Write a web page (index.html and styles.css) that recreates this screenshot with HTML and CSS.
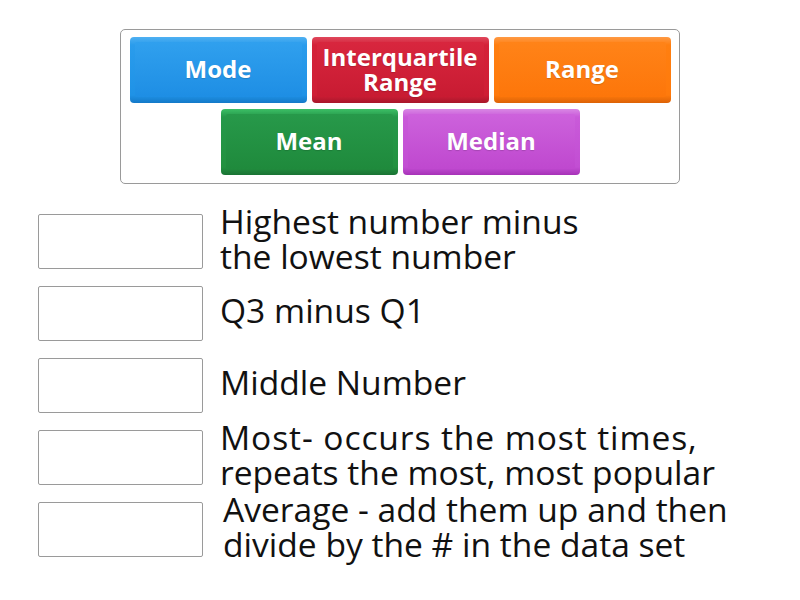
FILE: index.html
```html
<!DOCTYPE html>
<html lang="en">
<head>
<meta charset="utf-8">
<title>Match up</title>
<link rel="stylesheet" href="styles.css">
</head>
<body>
<div class="page">
  <div class="bank">
    <div class="tile tile-blue"><span class="tile-face">Mode</span></div>
    <div class="tile tile-red"><span class="tile-face">Interquartile Range</span></div>
    <div class="tile tile-orange"><span class="tile-face">Range</span></div>
    <div class="tile tile-green"><span class="tile-face">Mean</span></div>
    <div class="tile tile-purple"><span class="tile-face">Median</span></div>
  </div>
  <div class="rows">
    <div class="row"><div class="slot"></div><div class="def">Highest number minus<br>the lowest number</div></div>
    <div class="row"><div class="slot"></div><div class="def">Q3 minus Q1</div></div>
    <div class="row"><div class="slot"></div><div class="def">Middle Number</div></div>
    <div class="row"><div class="slot"></div><div class="def"><span class="spread">Most- occurs the most times,</span><br>repeats the most, most popular</div></div>
    <div class="row"><div class="slot"></div><div class="def def-shift">Average - add them up and then<br>divide by the # in the data set</div></div>
  </div>
</div>
</body>
</html>
```
FILE: styles.css
```css
html, body {
  margin: 0;
  padding: 0;
  background: #ffffff;
}
body {
  font-family: "Open Sans", "Liberation Sans", sans-serif;
  color: #111111;
}
.page {
  width: 800px;
  height: 600px;
  padding-top: 29px;
  box-sizing: border-box;
}
.bank {
  width: 560px;
  margin-left: 120px;
  box-sizing: border-box;
  border: 1px solid #9a9a9a;
  border-radius: 5px;
  padding: 7px 8px 8px 8px;
  display: flex;
  flex-wrap: wrap;
  justify-content: center;
  column-gap: 5px;
  row-gap: 6px;
}
.tile {
  width: 177px;
  height: 66px;
  box-sizing: border-box;
  border-radius: 4px;
  padding: 5px 5px 6px 5px;
  display: flex;
}
.tile-face {
  flex: 1;
  display: flex;
  align-items: center;
  justify-content: center;
  text-align: center;
  color: #ffffff;
  font-weight: 700;
  font-size: 24px;
  line-height: 25.5px;
  border-radius: 2px;
  text-shadow: 0 1px 1px rgba(0,0,0,0.15);
  padding-bottom: 1px;
}
.tile-blue { background: linear-gradient(#4fb0f2, #2a9cec 12%, #1f92e6 88%, #1479c8); }
.tile-blue .tile-face { background: linear-gradient(#30a0ee, #1e8ee4); }
.tile-red { background: linear-gradient(#e0485c, #d42139 12%, #cf1e35 88%, #a8162a); }
.tile-red .tile-face { background: linear-gradient(#d8263e, #c81b32); }
.tile-orange { background: linear-gradient(#ff9a45, #ff7f10 12%, #ff7a0c 88%, #dc6206); }
.tile-orange .tile-face { background: linear-gradient(#ff8318, #fd760a); }
.tile-green { background: linear-gradient(#3cbf66, #25984a 12%, #22913f 88%, #1a7334); }
.tile-green .tile-face { background: linear-gradient(#27994a, #1f8a3c); }
.tile-purple { background: linear-gradient(#d987e4, #c95ad9 12%, #c24ed3 88%, #a732b8); }
.tile-purple .tile-face { background: linear-gradient(#cd62dc, #bf48cf); }

.rows {
  margin-top: 30px;
  display: flex;
  flex-direction: column;
  gap: 17px;
}
.row {
  display: flex;
  align-items: center;
  height: 55px;
}
.slot {
  width: 165px;
  height: 55px;
  margin-left: 38px;
  box-sizing: border-box;
  border: 1px solid #9a9a9a;
  border-radius: 2px;
  flex: none;
}
.def {
  margin-left: 17px;
  margin-bottom: 6px;
  font-size: 33.6px;
  line-height: 34.5px;
  white-space: nowrap;
  color: #111111;
}
.def-shift {
  margin-left: 20px;
}
.spread {
  letter-spacing: 0.9px;
}
```
